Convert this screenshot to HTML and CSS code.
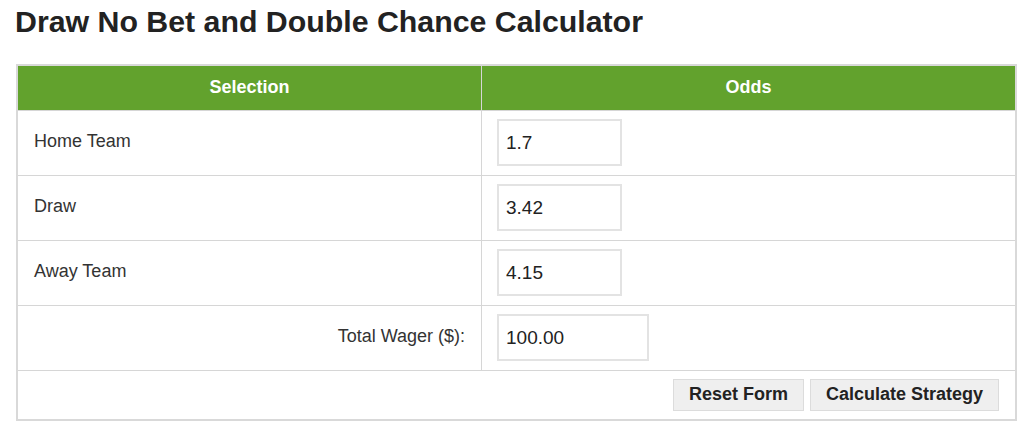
FILE: index.html
```html
<!DOCTYPE html>
<html lang="en">
<head>
<meta charset="utf-8">
<title>Draw No Bet and Double Chance Calculator</title>
<link rel="stylesheet" href="styles.css">
</head>
<body>
<div class="page">
  <h1 class="title">Draw No Bet and Double Chance Calculator</h1>
  <form class="calc">
    <table class="calc-table">
      <thead>
        <tr class="head-row">
          <th class="col-sel">Selection</th>
          <th class="col-odds">Odds</th>
        </tr>
      </thead>
      <tbody>
        <tr class="row">
          <td class="label">Home Team</td>
          <td class="field"><input class="odds-input" type="text" value="1.7"></td>
        </tr>
        <tr class="row">
          <td class="label">Draw</td>
          <td class="field"><input class="odds-input" type="text" value="3.42"></td>
        </tr>
        <tr class="row">
          <td class="label">Away Team</td>
          <td class="field"><input class="odds-input" type="text" value="4.15"></td>
        </tr>
        <tr class="row">
          <td class="label label-right">Total Wager ($):</td>
          <td class="field"><input class="odds-input wager-input" type="text" value="100.00"></td>
        </tr>
        <tr class="actions-row">
          <td class="actions" colspan="2">
            <div class="btns">
              <button type="button" class="btn">Reset Form</button>
              <button type="button" class="btn">Calculate Strategy</button>
            </div>
          </td>
        </tr>
      </tbody>
    </table>
  </form>
</div>
</body>
</html>
```

FILE: styles.css
```css
html, body {
  margin: 0;
  padding: 0;
  background: #ffffff;
}

body {
  font-family: "Liberation Sans", Arial, Helvetica, sans-serif;
  color: #333333;
}

.page {
  padding: 0 7px 0 16px;
}

.title {
  margin: 5px 0 0 -1px;
  font-size: 30.3px;
  line-height: 34px;
  font-weight: bold;
  color: #222222;
}

.calc {
  margin: 25px 0 0 0;
}

.calc-table {
  width: 1001px;
  border-collapse: collapse;
  border: 2px solid #d9d9d9;
}

.calc-table th,
.calc-table td {
  border: 1.5px solid #d6d6d6;
  vertical-align: middle;
}

.head-row {
  height: 45px;
}

.head-row th {
  background: #62a22d;
  color: #ffffff;
  font-size: 18px;
  font-weight: bold;
  text-align: center;
  padding: 0;
}

.col-sel {
  width: 463px;
}

.row {
  height: 65px;
}

.label {
  font-size: 18px;
  color: #333333;
  padding: 0 16px 2px 16px;
}

.label-right {
  text-align: right;
}

.field {
  padding: 0 15px;
}

.odds-input {
  box-sizing: border-box;
  display: block;
  width: 125px;
  height: 47px;
  border: 2px solid #e3e3e3;
  padding: 0 7px;
  font-family: "Liberation Sans", Arial, Helvetica, sans-serif;
  font-size: 19px;
  color: #222222;
  background: #ffffff;
  outline: none;
}

.wager-input {
  width: 152px;
}

.actions-row {
  height: 50px;
}

.actions {
  padding: 0 16px;
}

.btns {
  display: flex;
  justify-content: flex-end;
  gap: 6px;
}

.btn {
  box-sizing: border-box;
  height: 32px;
  padding: 0 15px;
  border: 1px solid #dcdcdc;
  background: #efefef;
  font-family: "Liberation Sans", Arial, Helvetica, sans-serif;
  font-size: 18px;
  font-weight: bold;
  color: #222222;
  cursor: pointer;
}
```
